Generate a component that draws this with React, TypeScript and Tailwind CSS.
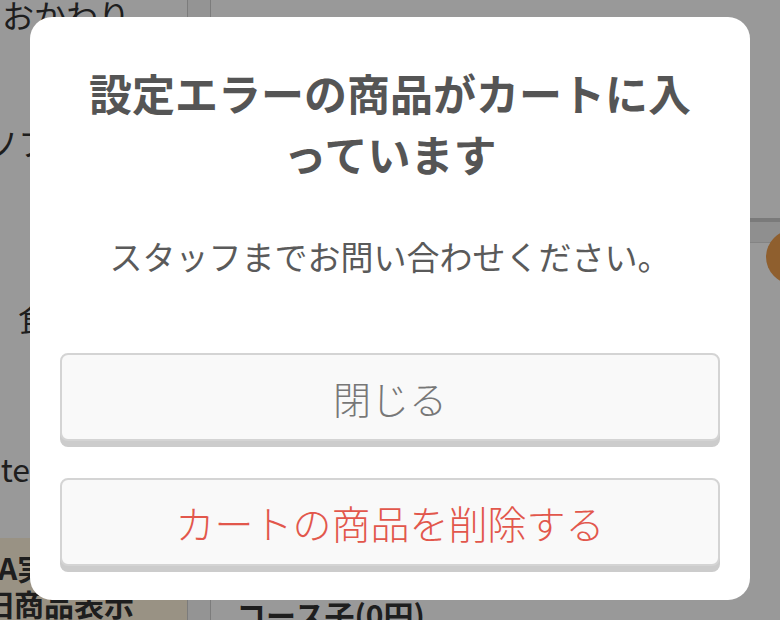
import React from 'react';

const jp = "font-['Noto_Sans_CJK_JP','Noto_Sans',sans-serif]";

function Sidebar() {
  return (
    <aside className="w-[187px] shrink-0 flex flex-col text-[#333] text-[32px] leading-[40px] overflow-hidden">
      <div className="h-[80px] -mt-[6px] pl-[2px] whitespace-nowrap">おかわり</div>
      <div className="h-[100px] pt-[50px] -ml-[14px] whitespace-nowrap">ソフトドリンク</div>
      <div className="h-[190px] pt-[126px] pl-[18px] whitespace-nowrap">食事メニュー</div>
      <div className="h-[180px] pt-[88px] w-[30px] flex justify-end whitespace-nowrap">Favorite</div>
      <div className="flex-1 bg-[#fff3dd] flex flex-col pt-[12px] font-bold text-[30px] leading-[34px]">
        <div className="-ml-[2px] whitespace-nowrap">A実</div>
        <div className="-ml-[16px] mt-[2px] whitespace-nowrap">旧商品表示</div>
      </div>
    </aside>
  );
}

function Main() {
  return (
    <main className="relative flex-1 flex flex-col">
      <div className="h-[218px]" />
      <div className="h-[4px] bg-[#cccccc]" />
      <div className="h-[20px] bg-[#eeeeee]" />
      <div className="h-[1px] bg-[#dddddd]" />
      <div className="flex-1" />
      <div className="pl-[25px] h-[26px] font-bold text-[30px] leading-[40px] text-[#333] whitespace-nowrap">
        コース子(0円)
      </div>
      <div className="absolute right-[-40px] top-[230px] w-[54px] h-[54px] rounded-full bg-[#ee9e4e]" />
    </main>
  );
}

export default function App() {
  return (
    <div className={`relative w-[780px] h-[620px] overflow-hidden bg-white ${jp}`}>
      <div className="flex h-full">
        <Sidebar />
        <div className="w-[24px] shrink-0 border-x border-[#cfcfcf] bg-[#f7f7f7]" />
        <Main />
      </div>

      <div className="absolute inset-0 bg-black/40 flex justify-center pt-[17px]">
        <div className="w-[720px] h-[583px] bg-white rounded-[22px] px-[30px] pt-[45px] flex flex-col">
          <h1 className="text-[43px] leading-[61px] font-bold text-[#555] text-center">
            設定エラーの商品がカートに入
            <br />
            っています
          </h1>
          <p className="mt-[48px] text-[33px] leading-[48px] text-[#5a5a5a] text-center">
            スタッフまでお問い合わせください。
          </p>

          <button className="mt-[73px] h-[88px] rounded-[8px] border-2 border-[#d4d4d4] bg-[#f9f9f9] shadow-[0_6px_0_#cccccc] text-[38px] font-light text-[#777] flex items-center justify-center">
            閉じる
          </button>
          <button className="mt-[37px] h-[88px] rounded-[8px] border-2 border-[#d4d4d4] bg-[#f9f9f9] shadow-[0_6px_0_#cccccc] text-[39px] font-light text-[#e2574c] flex items-center justify-center">
            カートの商品を削除する
          </button>
        </div>
      </div>
    </div>
  );
}
